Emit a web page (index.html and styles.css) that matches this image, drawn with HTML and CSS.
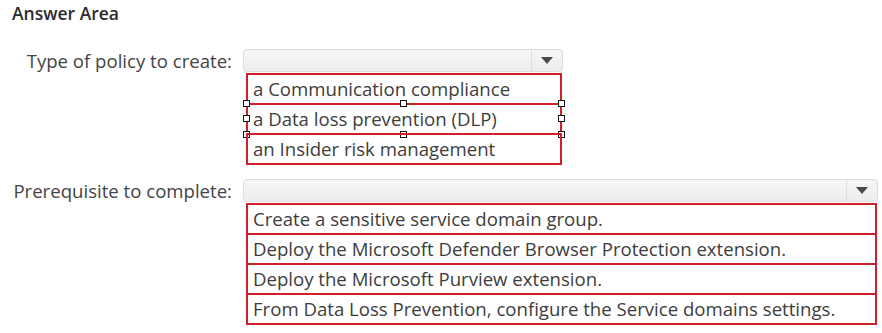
FILE: index.html
```html
<!DOCTYPE html>
<html lang="en">
<head>
    <meta charset="UTF-8">
    <title>Answer Area</title>
    <link rel="stylesheet" href="styles.css">
</head>
<body>
    <div class="answer-area">
        <h3 class="title">Answer Area</h3>

        <div class="question">
            <div class="label">Type of policy to create:</div>
            <div class="dropdown dropdown-short">
                <div class="select"><span class="arrow-box"><span class="arrow"></span></span></div>
                <ul class="options">
                    <li>a Communication compliance</li>
                    <li class="selected">
                        a Data loss prevention (DLP)
                        <span class="handle h-tl"></span>
                        <span class="handle h-tm"></span>
                        <span class="handle h-tr"></span>
                        <span class="handle h-ml"></span>
                        <span class="handle h-mr"></span>
                        <span class="handle h-bl"></span>
                        <span class="handle h-bm"></span>
                        <span class="handle h-br"></span>
                    </li>
                    <li>an Insider risk management</li>
                </ul>
            </div>
        </div>

        <div class="question">
            <div class="label">Prerequisite to complete:</div>
            <div class="dropdown dropdown-long">
                <div class="select"><span class="arrow-box"><span class="arrow"></span></span></div>
                <ul class="options">
                    <li>Create a sensitive service domain group.</li>
                    <li>Deploy the Microsoft Defender Browser Protection extension.</li>
                    <li>Deploy the Microsoft Purview extension.</li>
                    <li>From Data Loss Prevention, configure the Service domains settings.</li>
                </ul>
            </div>
        </div>
    </div>
</body>
</html>
```

FILE: styles.css
```css
* {
    box-sizing: border-box;
    margin: 0;
    padding: 0;
}

body {
    background-color: #fff;
    color: #3d3d3d;
    font-family: 'Open Sans', 'Noto Sans', Arial, sans-serif;
}

.answer-area {
    padding: 1px 4px 0 0;
}

.title {
    margin-left: 12px;
    font-size: 17.5px;
    font-weight: 600;
    color: #2b2b2b;
    line-height: 24px;
}

.question {
    display: grid;
    grid-template-columns: 232px auto;
    column-gap: 11px;
    align-items: start;
    margin-top: 14px;
}

.question:first-of-type {
    margin-top: 24px;
}

.label {
    text-align: right;
    font-size: 18.6px;
    line-height: 24px;
    color: #444;
}

.dropdown-short {
    width: 320px;
}

.dropdown-long {
    width: 635px;
}

.select {
    height: 23px;
    border: 1px solid #dcdcdc;
    border-radius: 4px;
    background: linear-gradient(#f7f7f7, #ececec);
    display: flex;
    justify-content: flex-end;
}

.arrow-box {
    width: 31px;
    border-left: 1px solid #dedede;
    display: flex;
    align-items: center;
    justify-content: center;
}

.arrow {
    width: 0;
    height: 0;
    border-left: 6px solid transparent;
    border-right: 6px solid transparent;
    border-top: 7px solid #4a4a4a;
}

.options {
    list-style: none;
    margin: 1px 1px 0 3px;
}

.options li {
    position: relative;
    border: 2px solid #d0202a;
    margin-top: -2px;
    padding: 0 0 0 5px;
    height: 32px;
    line-height: 28px;
    font-size: 18.6px;
    white-space: nowrap;
}

.options li:first-child {
    margin-top: 0;
}

.handle {
    position: absolute;
    width: 7px;
    height: 7px;
    background: #fff;
    border: 1px solid #111;
}

.h-tl, .h-tm, .h-tr { top: -5px; }
.h-ml, .h-mr { top: 10px; }
.h-bl, .h-bm, .h-br { bottom: -5px; }
.h-tl, .h-ml, .h-bl { left: -5px; }
.h-tr, .h-mr, .h-br { right: -5px; }
.h-tm, .h-bm { left: calc(50% - 4px); }
```
